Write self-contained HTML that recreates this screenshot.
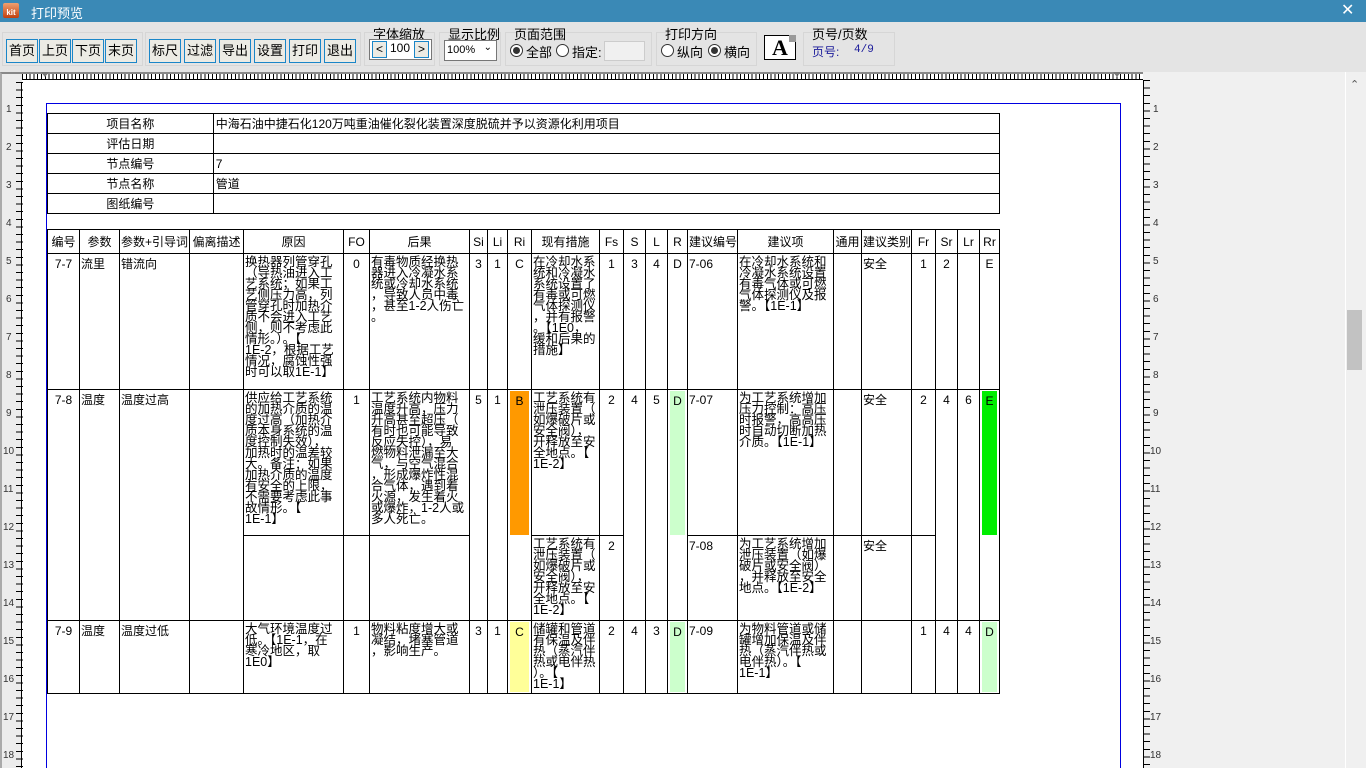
<!DOCTYPE html>
<html style="overflow:hidden;width:1366px;height:768px"><head><meta charset="utf-8">
<style>
*{margin:0;padding:0;box-sizing:border-box}
body{width:1366px;height:768px;overflow:hidden;background:#f0f0f0;font-family:"Liberation Sans","Noto Sans CJK SC",sans-serif;position:relative}
.a{position:absolute}
#title{left:0;top:0;width:1366px;height:22px;background:#3a89b6;color:#fff;font-size:13px}
#tb{left:0;top:22px;width:1366px;height:50px;background:#e4e4e4}
.grp{position:absolute;border:1px solid #d6d6d6}
.btn{position:absolute;top:39px;width:32px;height:24px;border:1px solid #1a86c8;background:#ecebe4;font-size:13px;text-align:center;line-height:22px;color:#000}
.lbl{position:absolute;font-size:13px;color:#000}
.rad{position:absolute;width:13px;height:13px;border:1px solid #333;border-radius:50%;background:#fff}
.rad.on::after{content:"";position:absolute;left:2px;top:2px;width:7px;height:7px;border-radius:50%;background:#333}
#page{left:22px;top:80px;width:1121px;height:688px;background:#fff}
#topr{left:22px;top:72px;width:1121px;height:8px;background:#fff;border-top:2px solid #888;border-bottom:1px solid #000;
background-image:repeating-linear-gradient(90deg,#000 0 1px,transparent 1px 3.8px)}
#leftr{left:0;top:72px;width:22px;height:696px;background:#ececec;border-top:2px solid #888;border-left:2px solid #aaa}
#rightr{left:1143px;top:80px;width:16px;height:688px}
.vr{background-image:repeating-linear-gradient(180deg,#000 0 1px,transparent 1px 7.6px);}
.num{position:absolute;font-size:10px;color:#333}
#bluebox{left:46px;top:103px;width:1075px;height:665px;border:1px solid #0000e0;border-bottom:none}
table{border-collapse:collapse;position:absolute;font-family:"Liberation Sans","Noto Sans CJK SC",sans-serif;font-size:12px;color:#000}
td{border:1px solid #000;vertical-align:top;padding:0 1px;line-height:11px;white-space:nowrap;overflow:hidden}
#info td{height:20px;vertical-align:middle;line-height:18px;padding:0 2px}
#main td.h{height:24px;vertical-align:middle;text-align:center;line-height:22px;font-size:12px}
.c{text-align:center}
.p{padding-top:5px}
.t{padding-top:3px;font-size:12.5px;letter-spacing:0}
.fill{height:100%;text-align:center;padding-top:5px}
</style></head><body>
<div id="title" class="a">
 <div class="a" style="left:3px;top:3px;width:16px;height:15px;background:linear-gradient(#f0a070,#c04010);border-radius:2px;color:#fff;font-size:8px;line-height:20px;text-align:center;font-weight:bold">kit</div>
 <div class="a" style="left:31px;top:3px">打印预览</div>
 <div class="a" style="left:1341px;top:0px;font-size:16px">✕</div>
</div>
<div id="tb" class="a"></div>
<div class="grp" style="left:2px;top:32px;width:141px;height:34px"></div>
<div class="grp" style="left:145px;top:32px;width:216px;height:34px"></div>
<div class="grp" style="left:364px;top:32px;width:71px;height:34px"></div>
<div class="grp" style="left:439px;top:32px;width:62px;height:34px"></div>
<div class="grp" style="left:505px;top:32px;width:147px;height:34px"></div>
<div class="grp" style="left:656px;top:32px;width:101px;height:34px"></div>
<div class="grp" style="left:803px;top:32px;width:92px;height:34px"></div>
<div class="btn" style="left:6px">首页</div>
<div class="btn" style="left:39px">上页</div>
<div class="btn" style="left:72px">下页</div>
<div class="btn" style="left:105px">末页</div>
<div class="btn" style="left:149px">标尺</div>
<div class="btn" style="left:184px">过滤</div>
<div class="btn" style="left:219px">导出</div>
<div class="btn" style="left:254px">设置</div>
<div class="btn" style="left:289px">打印</div>
<div class="btn" style="left:324px">退出</div>
<div class="lbl" style="left:373px;top:24px">字体缩放</div>
<div class="a" style="left:369px;top:39px;width:63px;height:21px;border:1px solid #777;background:#fff"></div>
<div class="a" style="left:372px;top:41px;width:15px;height:17px;border:1px solid #1a86c8;background:#ecebe4;font-size:12px;text-align:center;line-height:14px">&lt;</div>
<div class="a" style="left:414px;top:41px;width:15px;height:17px;border:1px solid #1a86c8;background:#ecebe4;font-size:12px;text-align:center;line-height:14px">&gt;</div>
<div class="a" style="left:390px;top:41px;font-size:12px;color:#000">100</div>
<div class="lbl" style="left:448px;top:24px">显示比例</div>
<div class="a" style="left:444px;top:40px;width:53px;height:21px;border:1px solid #777;background:#fff;font-size:11px;padding:3px 2px">100%<span style="position:absolute;right:4px;top:1px;font-size:10px">&#8964;</span></div>
<div class="lbl" style="left:514px;top:24px">页面范围</div>
<div class="rad on" style="left:510px;top:44px"></div><div class="lbl" style="left:526px;top:42px">全部</div>
<div class="rad" style="left:556px;top:44px"></div><div class="lbl" style="left:572px;top:42px">指定:</div>
<div class="a" style="left:604px;top:41px;width:41px;height:20px;border:1px solid #ccc;background:#f0f0f0"></div>
<div class="lbl" style="left:665px;top:24px">打印方向</div>
<div class="rad" style="left:661px;top:44px"></div><div class="lbl" style="left:677px;top:42px">纵向</div>
<div class="rad on" style="left:708px;top:44px"></div><div class="lbl" style="left:724px;top:42px">横向</div>
<div class="a" style="left:764px;top:35px;width:32px;height:25px;border:1px solid #000;background:#fff;font-family:'Liberation Serif',serif;font-size:22px;font-weight:bold;text-align:center;line-height:24px">A</div>
<div class="a" style="left:789px;top:35px;width:7px;height:7px;background:#999"></div>
<div class="lbl" style="left:812px;top:24px">页号/页数</div>
<div class="lbl" style="left:812px;top:43px;color:#1a1a9a;font-size:12px">页号:</div>
<div class="lbl" style="left:854px;top:44px;color:#1a1a9a;font-size:11px;font-family:'Liberation Mono',monospace">4/9</div>

<div id="page" class="a"></div>
<div id="topr" class="a"></div>
<div class="a" style="left:41px;top:72px;width:0;height:0;border-left:4px solid transparent;border-right:4px solid transparent;border-top:5px solid #777"></div>
<div class="a" style="left:1113px;top:72px;width:0;height:0;border-left:4px solid transparent;border-right:4px solid transparent;border-top:5px solid #777"></div>
<div id="leftr" class="a"><div class="a vr" style="left:14px;top:8px;width:7px;height:686px"></div><div class="a" style="left:19px;top:8px;width:1px;height:686px;background:#000"></div></div>
<div id="rightr" class="a vr" style="width:7px"></div>
<div class="a" style="left:1143px;top:80px;width:1px;height:688px;background:#000"></div>
<div class="num" style="left:6px;top:104px">1</div><div class="num" style="left:6px;top:142px">2</div><div class="num" style="left:6px;top:180px">3</div><div class="num" style="left:6px;top:218px">4</div><div class="num" style="left:6px;top:256px">5</div><div class="num" style="left:6px;top:294px">6</div><div class="num" style="left:6px;top:332px">7</div><div class="num" style="left:6px;top:370px">8</div><div class="num" style="left:6px;top:408px">9</div><div class="num" style="left:3px;top:446px">10</div><div class="num" style="left:3px;top:484px">11</div><div class="num" style="left:3px;top:522px">12</div><div class="num" style="left:3px;top:560px">13</div><div class="num" style="left:3px;top:598px">14</div><div class="num" style="left:3px;top:636px">15</div><div class="num" style="left:3px;top:674px">16</div><div class="num" style="left:3px;top:712px">17</div><div class="num" style="left:3px;top:750px">18</div>
<div class="num" style="left:1153px;top:104px">1</div><div class="num" style="left:1153px;top:142px">2</div><div class="num" style="left:1153px;top:180px">3</div><div class="num" style="left:1153px;top:218px">4</div><div class="num" style="left:1153px;top:256px">5</div><div class="num" style="left:1153px;top:294px">6</div><div class="num" style="left:1153px;top:332px">7</div><div class="num" style="left:1153px;top:370px">8</div><div class="num" style="left:1153px;top:408px">9</div><div class="num" style="left:1150px;top:446px">10</div><div class="num" style="left:1150px;top:484px">11</div><div class="num" style="left:1150px;top:522px">12</div><div class="num" style="left:1150px;top:560px">13</div><div class="num" style="left:1150px;top:598px">14</div><div class="num" style="left:1150px;top:636px">15</div><div class="num" style="left:1150px;top:674px">16</div><div class="num" style="left:1150px;top:712px">17</div><div class="num" style="left:1150px;top:750px">18</div>
<div class="a" style="left:1345px;top:72px;width:21px;height:696px;background:#f0f0f0;border-left:1px solid #fff"></div>
<div class="a" style="left:1350px;top:78px;font-size:11px;color:#555">&#8963;</div>
<div class="a" style="left:1347px;top:310px;width:15px;height:60px;background:#c2c2c2"></div>
<div id="bluebox" class="a"></div>

<table id="info" style="left:47px;top:113px;width:953px">
<colgroup><col style="width:166px"><col style="width:787px"></colgroup>
<tr><td class="c">项目名称</td><td>中海石油中捷石化120万吨重油催化裂化装置深度脱硫并予以资源化利用项目</td></tr>
<tr><td class="c">评估日期</td><td></td></tr>
<tr><td class="c">节点编号</td><td>7</td></tr>
<tr><td class="c">节点名称</td><td>管道</td></tr>
<tr><td class="c">图纸编号</td><td></td></tr>
</table>

<table id="main" style="left:47px;top:229px;width:953px;table-layout:fixed">
<colgroup><col style="width:32px"><col style="width:40px"><col style="width:70px"><col style="width:54px"><col style="width:100px"><col style="width:26px"><col style="width:100px"><col style="width:18px"><col style="width:20px"><col style="width:24px"><col style="width:68px"><col style="width:24px"><col style="width:22px"><col style="width:22px"><col style="width:20px"><col style="width:50px"><col style="width:96px"><col style="width:28px"><col style="width:50px"><col style="width:24px"><col style="width:22px"><col style="width:22px"><col style="width:20px"></colgroup>
<tr><td class="h">编号</td><td class="h">参数</td><td class="h" style="text-align:left">参数+引导词</td><td class="h">偏离描述</td><td class="h">原因</td><td class="h">FO</td><td class="h">后果</td><td class="h">Si</td><td class="h">Li</td><td class="h">Ri</td><td class="h">现有措施</td><td class="h">Fs</td><td class="h">S</td><td class="h">L</td><td class="h">R</td><td class="h" style="text-align:left">建议编号</td><td class="h">建议项</td><td class="h">通用</td><td class="h">建议类别</td><td class="h">Fr</td><td class="h">Sr</td><td class="h">Lr</td><td class="h">Rr</td></tr>
<tr style="height:136px">
<td class="c p">7-7</td><td class="p">流里</td><td class="p">错流向</td><td></td>
<td class="t">换热器列管穿孔<br>（导热油进入工<br>艺系统；如果工<br>艺侧压力高，列<br>管穿孔时加热介<br>质不会进入工艺<br>侧，则不考虑此<br>情形。）。【<br>1E-2，根据工艺<br>情况，腐蚀性强<br>时可以取1E-1】</td>
<td class="c p">0</td>
<td class="t">有毒物质经换热<br>器进入冷凝水系<br>统或冷却水系统<br>，导致人员中毒<br>，甚至1-2人伤亡<br>。</td>
<td class="c p">3</td><td class="c p">1</td><td class="c p">C</td>
<td class="t">在冷却水系<br>统和冷凝水<br>系统设置了<br>有毒或可燃<br>气体探测仪<br>，并有报警<br>。【1E0，<br>缓和后果的<br>措施】</td>
<td class="c p">1</td><td class="c p">3</td><td class="c p">4</td><td class="c p">D</td><td class="p">7-06</td>
<td class="t">在冷却水系统和<br>冷凝水系统设置<br>有毒气体或可燃<br>气体探测仪及报<br>警。【1E-1】</td>
<td></td><td class="p">安全</td><td class="c p">1</td><td class="c p">2</td><td></td><td class="c p">E</td></tr>
<tr style="height:146px">
<td class="c p" rowspan="2">7-8</td><td class="p" rowspan="2">温度</td><td class="p" rowspan="2">温度过高</td><td rowspan="2"></td>
<td class="t">供应给工艺系统<br>的加热介质的温<br>度过高（加热介<br>质本身系统的温<br>度控制失效），<br>加热时的温差较<br>大。备注：如果<br>加热介质的温度<br>有安全的上限，<br>不需要考虑此事<br>故情形。【<br>1E-1】</td>
<td class="c p">1</td>
<td class="t">工艺系统内物料<br>温度升高，压力<br>升高甚至超压（<br>有时也可能导致<br>反应失控），易<br>燃物料泄漏至大<br>气，与空气混合<br>，形成爆炸性混<br>合气体，遇到着<br>火源，发生着火<br>或爆炸，1-2人或<br>多人死亡。</td>
<td class="c p" rowspan="2">5</td><td class="c p" rowspan="2">1</td>
<td rowspan="2" style="padding:1px 2px;vertical-align:top"><div class="fill" style="height:144px;background:#ff9900">B</div></td>
<td class="t">工艺系统有<br>泄压装置（<br>如爆破片或<br>安全阀），<br>开释放至安<br>全地点。【<br>1E-2】</td>
<td class="c p">2</td>
<td class="c p" rowspan="2">4</td><td class="c p" rowspan="2">5</td>
<td rowspan="2" style="padding:1px 2px;vertical-align:top"><div class="fill" style="height:144px;background:#ccffcc">D</div></td>
<td class="p">7-07</td>
<td class="t">为工艺系统增加<br>压力控制：高压<br>时报警，高高压<br>时自动切断加热<br>介质。【1E-1】</td>
<td></td><td class="p">安全</td><td class="c p">2</td>
<td class="c p" rowspan="2">4</td><td class="c p" rowspan="2">6</td>
<td rowspan="2" style="padding:1px 2px;vertical-align:top"><div class="fill" style="height:144px;background:#00ee00">E</div></td></tr>
<tr style="height:85px">
<td></td><td></td><td></td>
<td class="t">工艺系统有<br>泄压装置（<br>如爆破片或<br>安全阀），<br>开释放至安<br>全地点。【<br>1E-2】</td>
<td class="c p">2</td>
<td class="p">7-08</td>
<td class="t">为工艺系统增加<br>泄压装置（如爆<br>破片或安全阀）<br>，并释放至安全<br>地点。【1E-2】</td>
<td></td><td class="p">安全</td><td></td></tr>
<tr style="height:73px">
<td class="c p">7-9</td><td class="p">温度</td><td class="p">温度过低</td><td></td>
<td class="t">大气环境温度过<br>低。【1E-1，在<br>寒冷地区，取<br>1E0】</td>
<td class="c p">1</td>
<td class="t">物料粘度增大或<br>凝结，堵塞管道<br>，影响生产。</td>
<td class="c p">3</td><td class="c p">1</td>
<td style="padding:1px 2px"><div class="fill" style="height:70px;background:#ffff99">C</div></td>
<td class="t">储罐和管道<br>有保温及伴<br>热（蒸汽伴<br>热或电伴热<br>）。【<br>1E-1】</td>
<td class="c p">2</td><td class="c p">4</td><td class="c p">3</td>
<td style="padding:1px 2px"><div class="fill" style="height:70px;background:#ccffcc">D</div></td>
<td class="p">7-09</td>
<td class="t">为物料管道或储<br>罐增加保温及伴<br>热（蒸汽伴热或<br>电伴热）。【<br>1E-1】</td>
<td></td><td></td><td class="c p">1</td><td class="c p">4</td><td class="c p">4</td>
<td style="padding:1px 2px"><div class="fill" style="height:70px;background:#ccffcc">D</div></td></tr>
</table>
</body></html>
